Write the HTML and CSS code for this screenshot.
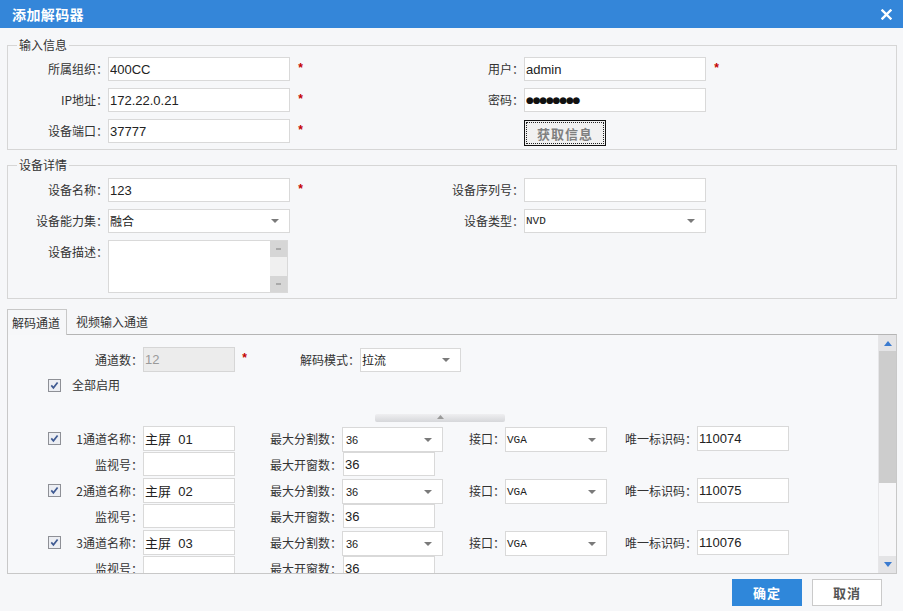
FILE: index.html
```html
<!DOCTYPE html>
<html lang="zh-CN">
<head>
<meta charset="utf-8">
<title>添加解码器</title>
<link rel="stylesheet" href="styles.css">
</head>
<body>
<div class="dialog">
  <header class="titlebar">
    <span class="title">添加解码器</span>
    <span class="close"><svg width="11" height="11" viewBox="0 0 11 11"><path d="M1.5 1.5l8 8M9.5 1.5l-8 8" stroke="#fff" stroke-width="2.4" stroke-linecap="square"/></svg></span>
  </header>

  <fieldset class="group group-input">
    <legend>输入信息</legend>
    <div class="form-grid">
      <label class="lbl">所属组织：</label><input class="field" value="400CC"><span class="star">*</span>
      <label class="lbl">用户：</label><input class="field" value="admin"><span class="star">*</span>

      <label class="lbl">IP地址：</label><input class="field" value="172.22.0.21"><span class="star">*</span>
      <label class="lbl">密码：</label><input class="field pwd" value="●●●●●●●●"><span></span>

      <label class="lbl">设备端口：</label><input class="field" value="37777"><span class="star">*</span>
      <span></span><button class="get-btn"><span class="get-inner">获取信息</span></button><span></span>
    </div>
  </fieldset>

  <fieldset class="group group-detail">
    <legend>设备详情</legend>
    <div class="form-grid detail-grid">
      <label class="lbl">设备名称：</label><input class="field" value="123"><span class="star">*</span>
      <label class="lbl">设备序列号：</label><input class="field" value=""><span></span>

      <label class="lbl">设备能力集：</label>
      <div class="select"><span>融合</span><svg width="8" height="4" viewBox="0 0 8 4"><path d="M0 0h8L4 4z" fill="#7a7a7a"/></svg></div>
      <span></span>
      <label class="lbl">设备类型：</label>
      <div class="select"><span class="mono">NVD</span><svg width="8" height="4" viewBox="0 0 8 4"><path d="M0 0h8L4 4z" fill="#7a7a7a"/></svg></div>
      <span></span>

      <label class="lbl">设备描述：</label>
      <div class="textarea">
        <div class="ta-body"></div>
        <div class="ta-scroll">
          <div class="ta-btn"><i></i></div>
          <div class="ta-track"></div>
          <div class="ta-btn"><i></i></div>
        </div>
      </div>
      <span></span><span></span><span></span><span></span>
    </div>
  </fieldset>

  <div class="tabs">
    <div class="tab active">解码通道</div>
    <div class="tab">视频输入通道</div>
  </div>
  <div class="panel">
    <div class="panel-content">
      <div class="top-row">
        <label class="lbl">通道数：</label>
        <input class="field disabled" value="12" disabled>
        <div class="star-lbl"><span class="star">*</span><label class="lbl">解码模式：</label></div>
        <div class="select"><span>拉流</span><svg width="8" height="4" viewBox="0 0 8 4"><path d="M0 0h8L4 4z" fill="#7a7a7a"/></svg></div>
      </div>
      <div class="check-row">
        <span class="cb"><svg width="13" height="13" viewBox="0 0 13 13"><rect x="0.5" y="0.5" width="12" height="12" fill="#eceef3" stroke="#8e9096"/><path d="M3.3 6.4l2.1 2.4 4.2-5.3" fill="none" stroke="#3f5a92" stroke-width="1.7"/></svg></span>
        <span>全部启用</span>
      </div>
      <div class="splitter"><svg width="7" height="4" viewBox="0 0 7 4"><path d="M0 4h7L3.5 0z" fill="#9a9a9a"/></svg></div>

      <div class="chan">
        <div class="c-lbl"><span class="cb"><svg width="13" height="13" viewBox="0 0 13 13"><rect x="0.5" y="0.5" width="12" height="12" fill="#eceef3" stroke="#8e9096"/><path d="M3.3 6.4l2.1 2.4 4.2-5.3" fill="none" stroke="#3f5a92" stroke-width="1.7"/></svg></span><label class="lbl">1通道名称：</label></div>
        <input class="field c-in" value="主屏  01">
        <label class="lbl">最大分割数：</label>
        <div class="select c-sel"><span class="num">36</span><svg width="8" height="4" viewBox="0 0 8 4"><path d="M0 0h8L4 4z" fill="#7a7a7a"/></svg></div>
        <label class="lbl">接口：</label>
        <div class="select c-sel"><span class="mono">VGA</span><svg width="8" height="4" viewBox="0 0 8 4"><path d="M0 0h8L4 4z" fill="#7a7a7a"/></svg></div>
        <label class="lbl">唯一标识码：</label>
        <input class="field c-in" value="110074">

        <label class="lbl">监视号：</label>
        <input class="field c-in" value="">
        <label class="lbl">最大开窗数：</label>
        <input class="field c-in c-win" value="36">
      </div>

      <div class="chan">
        <div class="c-lbl"><span class="cb"><svg width="13" height="13" viewBox="0 0 13 13"><rect x="0.5" y="0.5" width="12" height="12" fill="#eceef3" stroke="#8e9096"/><path d="M3.3 6.4l2.1 2.4 4.2-5.3" fill="none" stroke="#3f5a92" stroke-width="1.7"/></svg></span><label class="lbl">2通道名称：</label></div>
        <input class="field c-in" value="主屏  02">
        <label class="lbl">最大分割数：</label>
        <div class="select c-sel"><span class="num">36</span><svg width="8" height="4" viewBox="0 0 8 4"><path d="M0 0h8L4 4z" fill="#7a7a7a"/></svg></div>
        <label class="lbl">接口：</label>
        <div class="select c-sel"><span class="mono">VGA</span><svg width="8" height="4" viewBox="0 0 8 4"><path d="M0 0h8L4 4z" fill="#7a7a7a"/></svg></div>
        <label class="lbl">唯一标识码：</label>
        <input class="field c-in" value="110075">

        <label class="lbl">监视号：</label>
        <input class="field c-in" value="">
        <label class="lbl">最大开窗数：</label>
        <input class="field c-in c-win" value="36">
      </div>

      <div class="chan">
        <div class="c-lbl"><span class="cb"><svg width="13" height="13" viewBox="0 0 13 13"><rect x="0.5" y="0.5" width="12" height="12" fill="#eceef3" stroke="#8e9096"/><path d="M3.3 6.4l2.1 2.4 4.2-5.3" fill="none" stroke="#3f5a92" stroke-width="1.7"/></svg></span><label class="lbl">3通道名称：</label></div>
        <input class="field c-in" value="主屏  03">
        <label class="lbl">最大分割数：</label>
        <div class="select c-sel"><span class="num">36</span><svg width="8" height="4" viewBox="0 0 8 4"><path d="M0 0h8L4 4z" fill="#7a7a7a"/></svg></div>
        <label class="lbl">接口：</label>
        <div class="select c-sel"><span class="mono">VGA</span><svg width="8" height="4" viewBox="0 0 8 4"><path d="M0 0h8L4 4z" fill="#7a7a7a"/></svg></div>
        <label class="lbl">唯一标识码：</label>
        <input class="field c-in" value="110076">

        <label class="lbl">监视号：</label>
        <input class="field c-in" value="">
        <label class="lbl">最大开窗数：</label>
        <input class="field c-in c-win" value="36">
      </div>
    </div>
    <div class="vscroll">
      <div class="vs-btn"><svg width="8" height="5" viewBox="0 0 8 5"><path d="M0 5h8L4 0z" fill="#3b7bd0"/></svg></div>
      <div class="vs-thumb"></div>
      <div class="vs-track"></div>
      <div class="vs-btn"><svg width="8" height="5" viewBox="0 0 8 5"><path d="M0 0h8L4 5z" fill="#3b7bd0"/></svg></div>
    </div>
  </div>

  <div class="footer">
    <button class="btn primary">确定</button>
    <button class="btn">取消</button>
  </div>
</div>
</body>
</html>
```
FILE: styles.css
```css
html, body {
  margin: 0;
  padding: 0;
}
body {
  width: 903px;
  height: 611px;
  overflow: hidden;
  background: #f6f7f9;
  font-family: "Noto Sans CJK SC", "Liberation Sans", sans-serif;
  font-size: 12px;
  line-height: 16px;
  color: #333;
}
.dialog {
  width: 903px;
  height: 611px;
}
.titlebar {
  height: 28px;
  background: #3486d9;
  display: flex;
  align-items: center;
  justify-content: space-between;
  padding: 0 11px 0 12px;
}
.title {
  color: #fff;
  font-weight: bold;
  font-size: 14px;
  letter-spacing: 0.4px;
}
.close {
  display: flex;
  margin-top: 1px;
}

.group {
  margin: 9px 6px 0 7px;
  padding: 4px 0 6px 0;
  border: 1px solid #d6d6d6;
  min-width: 0;
}
.group legend {
  margin-left: 9px;
  padding: 0 2px;
  font-size: 12px;
  line-height: 16px;
  color: #333;
}
.group-detail {
  margin-top: 7px;
  padding-top: 5px;
  padding-bottom: 5px;
}
.form-grid {
  display: grid;
  grid-template-columns: 100px 182px 134px 100px 182px 1fr;
  grid-auto-rows: 24px;
  row-gap: 7px;
  align-items: start;
}
.detail-grid {
  grid-template-rows: 24px 24px 53px;
}
.lbl {
  text-align: right;
  line-height: 24px;
  white-space: nowrap;
  color: #333;
}
.field {
  box-sizing: border-box;
  height: 24px;
  width: 100%;
  margin: 0;
  border: 1px solid #d9d9d9;
  background: #fff;
  padding: 0 1px;
  font-family: "Liberation Sans", "Noto Sans CJK SC", sans-serif;
  font-size: 13px;
  color: #222;
  outline: none;
}
.field.pwd {
  font-family: "DejaVu Sans", sans-serif;
  font-size: 9px;
  letter-spacing: -1.2px;
  color: #111;
}
.field.disabled {
  background: #ececec;
  color: #9a9a9a;
  border-color: #d6d6d6;
}
.star {
  color: #c40000;
  padding-left: 7px;
  line-height: 24px;
  font-weight: bold;
  font-family: "Liberation Mono", monospace;
  font-size: 12px;
}
.get-btn {
  margin: 1px 0 0 0;
  width: 82px;
  height: 26px;
  padding: 1px;
  border: 1px solid #111;
  background: #f1f1f1;
  box-sizing: border-box;
  display: flex;
  cursor: default;
}
.get-inner {
  flex: 1;
  border: 1px dotted #222;
  display: flex;
  align-items: center;
  justify-content: center;
  font-family: "Noto Sans CJK SC", sans-serif;
  font-size: 13px;
  font-weight: bold;
  color: #808080;
  letter-spacing: 1px;
}
.select {
  box-sizing: border-box;
  height: 24px;
  border: 1px solid #d9d9d9;
  background: #fff;
  display: flex;
  align-items: center;
  justify-content: space-between;
  padding: 0 10px 0 1px;
  font-size: 12px;
  color: #222;
}
.mono {
  font-family: "Liberation Mono", monospace;
  font-size: 11px;
}
.num {
  font-family: "Liberation Sans", sans-serif;
  font-size: 11px;
  padding-left: 2px;
}
.textarea {
  box-sizing: border-box;
  width: 180px;
  height: 53px;
  border: 1px solid #d9d9d9;
  background: #fff;
  display: flex;
}
.ta-body {
  flex: 1;
}
.ta-scroll {
  width: 17px;
  display: flex;
  flex-direction: column;
}
.ta-btn {
  height: 16px;
  background: #d6d6d6;
  display: flex;
  align-items: center;
  justify-content: center;
}
.ta-btn i {
  width: 5px;
  height: 2px;
  background: #a9a9a9;
}
.ta-track {
  flex: 1;
  background: #f0f0f0;
}

.tabs {
  display: flex;
  margin: 10px 6px 0 7px;
  height: 26px;
}
.tab {
  display: flex;
  align-items: center;
  padding: 0 0 0 9px;
  color: #333;
}
.tab.active {
  box-sizing: border-box;
  width: 60px;
  padding-left: 4px;
  border: 1px solid #c8c8c8;
  border-bottom: none;
  background: #f6f7f9;
  position: relative;
  z-index: 1;
}
.panel {
  box-sizing: border-box;
  margin: -1px 6px 0 7px;
  height: 240px;
  border: 1px solid #c8c8c8;
  border-top-color: #b5b5b5;
  display: flex;
  background: #f7f8fa;
}
.panel-content {
  flex: 1;
  overflow: hidden;
  padding-top: 12px;
}
.top-row {
  display: grid;
  grid-template-columns: 135px 92px 125px 101px;
  height: 25px;
}
.top-row .field, .top-row .select {
  height: 25px;
}
.top-row .lbl {
  line-height: 25px;
}
.top-row .select {
  margin-top: 1px;
  height: 24px;
}
.star-lbl {
  display: flex;
  justify-content: space-between;
}
.star-lbl .star {
  padding-left: 6px;
  line-height: 25px;
}
.check-row {
  margin-top: 2px;
  height: 22px;
  display: flex;
  align-items: center;
  padding-left: 40px;
  gap: 11px;
}
.cb {
  display: flex;
  width: 13px;
  height: 13px;
}
.splitter {
  margin: 18px 0 4px 367px;
  width: 130px;
  height: 8px;
  background: linear-gradient(#efeff1, #d6d7da);
  border-radius: 2px;
  display: flex;
  align-items: flex-start;
  justify-content: center;
  padding-top: 1px;
  box-sizing: border-box;
}
.chan {
  display: grid;
  grid-template-columns: 135px 92px 107px 101px 62px 102px 90px 92px;
  grid-template-rows: 25px 24px;
  row-gap: 1px;
  margin-bottom: 2px;
  align-items: start;
}
.chan .lbl {
  line-height: 25px;
}
.c-lbl {
  display: flex;
  align-items: center;
  height: 25px;
  padding-left: 40px;
}
.c-lbl .lbl {
  margin-left: auto;
}
.c-in {
  height: 25px;
}
.chan input:nth-of-type(n+3) {
  height: 24px;
}
.c-sel {
  margin-top: 1px;
  height: 25px;
}
.c-win {
  margin-left: 1px;
  width: 92px;
}
.vscroll {
  width: 17px;
  display: flex;
  flex-direction: column;
  border-left: 1px solid #e6e6e8;
  background: #f7f7f9;
}
.vs-btn {
  height: 16px;
  background: #e4e4e6;
  display: flex;
  align-items: center;
  justify-content: center;
}
.vs-btn:last-child {
  height: 17px;
}
.vs-thumb {
  height: 132px;
  background: #cdcdcd;
}
.vs-track {
  flex: 1;
}

.footer {
  display: flex;
  justify-content: flex-end;
  gap: 10px;
  padding: 5px 21px 0 0;
}
.btn {
  width: 70px;
  height: 27px;
  margin: 0;
  border: 1px solid #cacaca;
  background: #fff;
  color: #555;
  font-family: "Noto Sans CJK SC", sans-serif;
  font-size: 13px;
  font-weight: bold;
  letter-spacing: 1px;
  padding: 0;
  cursor: default;
}
.btn.primary {
  background: #2f87da;
  border-color: #2f87da;
  color: #fff;
}
```
